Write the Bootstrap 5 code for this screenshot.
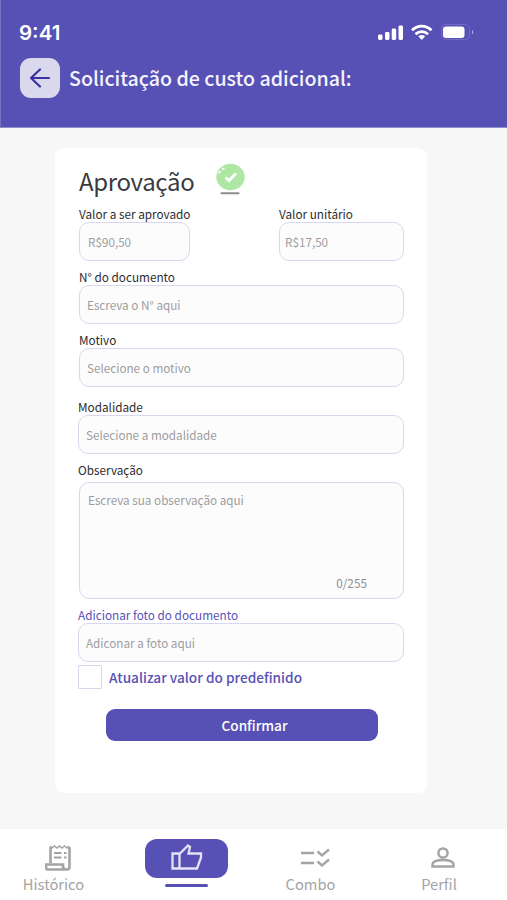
<!DOCTYPE html>
<html lang="pt-BR">
<head>
<meta charset="utf-8">
<meta name="viewport" content="width=device-width, initial-scale=1">
<title>Solicitação de custo adicional</title>
<link href="https://cdn.jsdelivr.net/npm/bootstrap@5.3.0/dist/css/bootstrap.min.css" rel="stylesheet">
<style>
:root{--brand:#5751b5;--line:#d9d7ef}
body{font-family:"Noto Sans CJK SC","Noto Sans",sans-serif;width:507px;height:900px;background:#f7f7f8;overflow:hidden;color:#3b3b3f}
.topbar{height:128px;background:var(--brand);border-left:1px solid #7773c2;border-bottom:1px solid #918dcd}
.status{height:58px;padding:8px 32px 0 18px}
.clock{font:600 20.5px/26px Inter,sans-serif}
.back{width:40px;height:40px;border-radius:11px;background:#d9d8ec;margin-left:19px}
.page-title{font-size:19.6px;line-height:28px;font-weight:500;padding-left:9px;color:#f4f3fc}
.panel{width:372px;height:645px;margin:20px 0 0 55px;padding:14px 23px 0 24px;border-radius:9px}
.panel h1{font-size:24px;line-height:37px;font-weight:400;width:137px;letter-spacing:-.35px}
.values{margin-top:6px}
.lbl{font-size:11.75px;line-height:16px;display:block;font-weight:400;color:#2c2c30;white-space:nowrap}
.lbl-brand{color:var(--brand)}
.field{height:39px;border:1px solid var(--line);border-radius:10px;background:#fcfcfd;padding:0 7px;font-size:11.7px;line-height:38px;color:#9c9c9e;box-shadow:none}
.field::placeholder{color:#9c9c9e;opacity:1}
.value-a{width:111px;padding-left:8px}
.value-b{width:125px;padding-left:5px}
.area{height:117px;line-height:18px;padding:8px 8px;resize:none}
.counter{right:37px;bottom:7px;font-size:11.8px;line-height:18px;color:#8f8f91}
.shift{margin-left:-1px}
.check-row{margin-top:3px}
.box{width:24px;height:24px;border:1px solid var(--line);background-color:#fff;margin:0}
.form-check-input.box{border-radius:1px}
.check-text{font-size:13.65px;line-height:24px;font-weight:500;color:var(--brand);padding-left:7px}
.confirm{width:272px;height:32px;border-radius:9px;background:var(--brand);font-size:13.6px;line-height:32px;font-weight:500;padding:0 0 0 25px;margin:20px 0 0 27px}
.tabs{height:71px;color:#a4a4a6;font-size:14.7px;line-height:20px}
.tab-item{text-decoration:none;color:inherit}
.tab-item>svg{margin-top:16px;margin-bottom:3px}
.pill{width:83px;height:39px;border-radius:12px;background:var(--brand);margin-top:10px}
.tab-line{width:43px;height:3px;border-radius:2px;background:var(--brand);margin-top:6px}
</style>
</head>
<body class="d-flex flex-column">
<header class="topbar text-white flex-shrink-0">
  <div class="status d-flex align-items-center justify-content-between">
    <span class="clock">9:41</span>
    <svg width="98" height="20" viewBox="0 0 98 20" fill="#fff" aria-hidden="true">
      <rect x="1" y="11.500" width="4.500" height="5.500" rx="1.400"/><rect x="8" y="9" width="4.500" height="8" rx="1.400"/><rect x="14.700" y="5.500" width="4.500" height="11.500" rx="1.400"/><rect x="21.500" y="2.500" width="4.500" height="14.500" rx="1.400"/>
      <g fill="none" stroke="#fff" stroke-width="2.700"><path d="M35 7.300C40.500 1.700 49 1.700 54.500 7.300"/><path d="M38.500 11.200C42 7.800 47.500 7.800 51 11.200"/></g>
      <path d="M41.300 13.200Q44.700 10.800 48.200 13.200L44.700 17Z"/>
      <rect x="64.500" y="1.500" width="28" height="15" rx="4.500" fill="none" stroke="#fff" stroke-opacity=".15"/><rect x="66" y="3.500" width="21.500" height="11.500" rx="3"/><path d="M95 7Q97.500 9 95 11.500Z" opacity=".55"/>
    </svg>
  </div>
  <div class="d-flex align-items-center">
    <a href="#" class="back d-flex align-items-center justify-content-center flex-shrink-0" aria-label="Voltar"><svg width="22" height="22" viewBox="0 0 22 22" fill="none" stroke="#3c30a0" stroke-width="2.200" stroke-linecap="round" stroke-linejoin="round"><path d="M20 11H2M11 2.500 2 11 11 19.500"/></svg></a>
    <span class="page-title text-nowrap">Solicitação de custo adicional:</span>
  </div>
</header>
<main class="flex-grow-1">
  <form class="panel bg-white">
    <div class="d-flex align-items-start">
      <h1 class="mb-0">Aprovação</h1>
      <svg width="30" height="34" viewBox="0 0 30 34" aria-hidden="true"><ellipse cx="14.500" cy="15" rx="14.200" ry="13.200" fill="#aee6a4"/><path d="m9.500 15.500 3.500 3 7-7" fill="none" stroke="#fff" stroke-width="2.800"/><path d="m2.500 11 2-1.500M6.500 7l1.500-.5" stroke="#fff" stroke-width="1.400" stroke-linecap="round"/><path d="M5.500 31.200h17" stroke="#8d8d8d" stroke-width="2" stroke-linecap="round"/></svg>
    </div>
    <div class="values d-flex justify-content-between" style="padding-top:1px">
      <div><label class="lbl" for="v1">Valor a ser aprovado</label><input id="v1" class="form-control field value-a" placeholder="R$90,50"></div>
      <div><label class="lbl" for="v2">Valor unitário</label><input id="v2" class="form-control field value-b" placeholder="R$17,50"></div>
    </div>
    <div class="mt-2"><label class="lbl" for="doc">N° do documento</label><input id="doc" class="form-control field" placeholder="Escreva o N° aqui"></div>
    <div class="mt-2"><label class="lbl" for="mot">Motivo</label><input id="mot" class="form-control field" placeholder="Selecione o motivo"></div>
    <div class="mt-2 pt-1 shift"><label class="lbl" for="mod">Modalidade</label><input id="mod" class="form-control field" placeholder="Selecione a modalidade"></div>
    <div class="mt-2"><label class="lbl mb-1 shift" for="obs">Observação</label>
      <div class="position-relative d-flex"><textarea id="obs" class="form-control field area" placeholder="Escreva sua observação aqui"></textarea><span class="counter position-absolute">0/255</span></div></div>
    <div class="mt-2 shift"><label class="lbl lbl-brand" for="foto">Adicionar foto do documento</label><input id="foto" class="form-control field" placeholder="Adiconar a foto aqui"></div>
    <div class="check-row shift d-flex align-items-center"><input class="form-check-input box" type="checkbox" id="upd"><label class="check-text text-nowrap" for="upd">Atualizar valor do predefinido</label></div>
    <button type="button" class="btn text-white border-0 confirm d-block">Confirmar</button>
  </form>
</main>
<nav class="tabs bg-white d-flex flex-shrink-0">
  <a href="#" class="tab-item d-flex flex-column align-items-center" style="width:107px"><svg class="ms-2" width="26" height="26" viewBox="0 0 26 26" fill="none" stroke="#a4a4a6" stroke-width="2.600"><path d="M5.500 18V2M24.500 2v20q0 2.500-2.500 2.500H3q-2 0-2-2.500v-2.500h17v2.500q0 2 2.500 2"/><path d="m5 1 2 2 2.500-2 2.500 2 2.500-2 2.500 2 2.500-2 2.500 2 2-2" stroke-width="1.500"/><path d="M9 8h7.500M9 12.500h7.500M19 8h2.500M19 12.500h2.500" stroke-width="2"/></svg><span>Histórico</span></a>
  <a href="#" class="tab-item d-flex flex-column align-items-center" style="width:159px" aria-label="Aprovação"><span class="pill d-flex align-items-center justify-content-center"><svg class="mb-1" width="32" height="28" viewBox="0 0 32 28" fill="none" stroke="#e4e2f4" stroke-width="2.300" stroke-linejoin="miter"><path d="M1.500 10.500h7v15h-7ZM8.500 11 17 2.500l2 1.500-1.500 6.500H30v4l-4 11H8.500"/></svg></span><span class="tab-line"></span></a>
  <a href="#" class="tab-item d-flex flex-column align-items-center" style="width:89px"><svg class="ms-2" width="30" height="26" viewBox="-1 0 30 26" fill="none" stroke="#a4a4a6" stroke-width="2.400"><path d="M0 8h13M0 18h13M16.500 6.500l4.500 4 7-6M16.500 16.500l4.500 4 7-6"/></svg><span>Combo</span></a>
  <a href="#" class="tab-item d-flex flex-column align-items-center ps-3" style="width:152px"><svg class="ms-2" width="26" height="26" viewBox="0 0 26 26" fill="none" stroke="#a4a4a6" stroke-width="2.500"><circle cx="13" cy="8" r="4.600"/><path d="M2.500 21.500V19q1-4 10.500-4t10.500 4v2.500Z"/></svg><span>Perfil</span></a>
</nav>
<script src="https://cdn.jsdelivr.net/npm/bootstrap@5.3.0/dist/js/bootstrap.bundle.min.js"></script>
</body>
</html>
